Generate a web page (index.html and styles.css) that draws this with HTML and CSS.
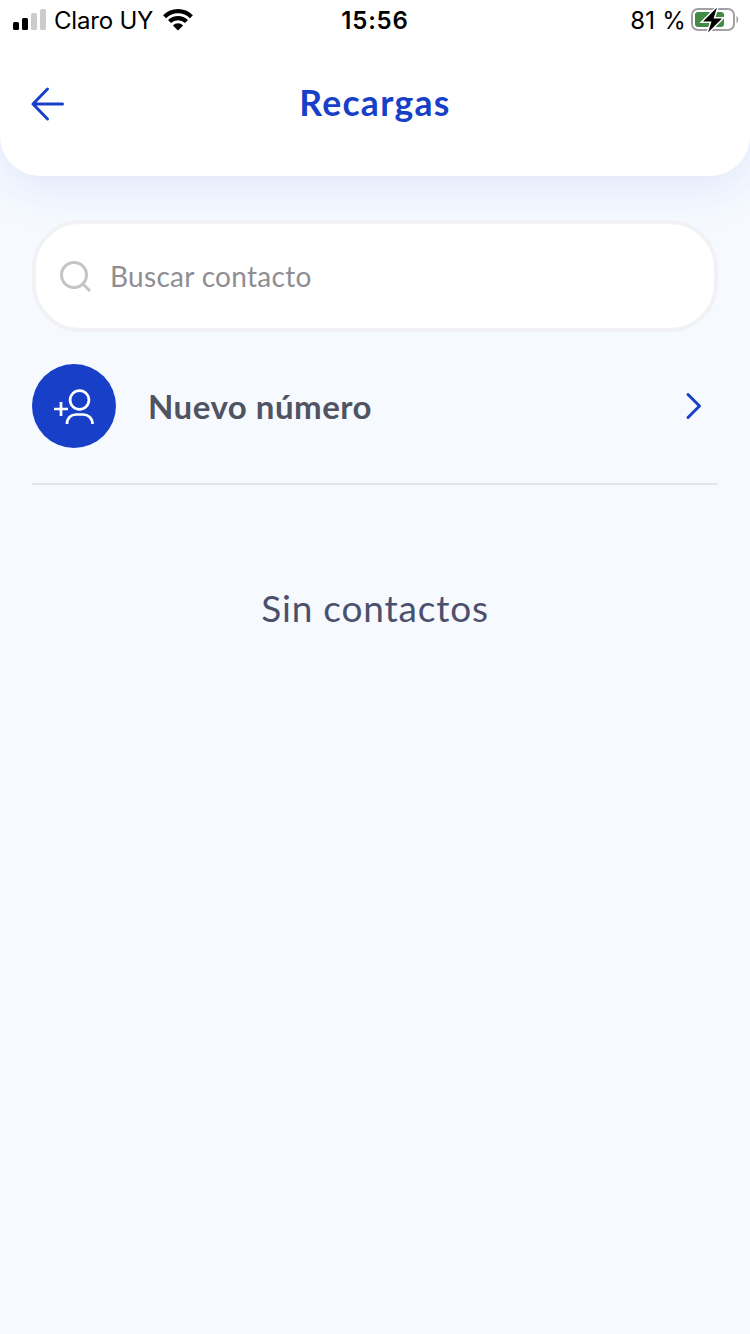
FILE: index.html
```html
<!DOCTYPE html>
<html lang="es">
<head>
<meta charset="utf-8">
<title>Recargas</title>
<link rel="stylesheet" href="styles.css">
</head>
<body>
<header class="header">
  <div class="status">
    <div class="status-left">
      <svg class="signal" width="33" height="22" viewBox="0 0 33 22">
        <rect x="0" y="13" width="6" height="8" rx="1.5"/>
        <rect x="9" y="9" width="6" height="12" rx="1.5"/>
        <rect class="dim" x="18" y="4" width="6" height="17" rx="1.5"/>
        <rect class="dim" x="27" y="0" width="6" height="21" rx="1.5"/>
      </svg>
      <span class="carrier">Claro UY</span>
      <svg class="wifi" width="30" height="22" viewBox="0 0 30 22">
        <path class="arc" d="M1.6 7.7A19 19 0 0 1 28.400 7.700M6.500 12.500A12.200 12.200 0 0 1 23.500 12.500"/>
        <path d="M9.900 16.400A7.200 7.200 0 0 1 20.100 16.400L15 21.600Z"/>
      </svg>
    </div>
    <span class="time">15:56</span>
    <div class="status-right">
      <span class="percent">81 %</span>
      <svg class="battery" width="48" height="28" viewBox="0 0 48 28">
        <rect class="case" x="1" y="3" width="42" height="21" rx="6"/>
        <rect class="charge" x="4" y="6" width="29" height="15" rx="3"/>
        <path class="cap" d="M45.500 9.500Q49 13.500 45.500 17.500Z"/>
        <path class="bolt" d="M26 1.500 12 15.500H20.500L17 26.500 31 12.500H22.500Z"/>
      </svg>
    </div>
  </div>
  <div class="nav">
    <svg class="back" width="36" height="36" viewBox="0 0 36 36"><path d="M17.500 3 3 18 17.500 33M3 18H32.500"/></svg>
    <h1 class="title">Recargas</h1>
  </div>
</header>
<main class="content">
  <div class="search">
    <svg class="magnifier" width="34" height="34" viewBox="0 0 34 34"><circle cx="15" cy="15" r="12.500"/><path d="M23 23 31 31"/></svg>
    <span class="placeholder">Buscar contacto</span>
  </div>
  <div class="row">
    <span class="avatar">
      <svg width="84" height="84" viewBox="0 0 84 84"><circle cx="47.500" cy="36" r="9.400"/><path d="M35 60C35 54 39 50.500 44 50.500H51C56 50.500 60.500 54 60.500 60M22 45H36M29 38V52"/></svg>
    </span>
    <span class="label">Nuevo número</span>
    <svg class="chevron" width="18" height="30" viewBox="0 0 18 30"><path d="M3 3.500 14.500 15 3 26.500"/></svg>
  </div>
  <p class="empty">Sin contactos</p>
</main>
</body>
</html>
```
FILE: styles.css
```css
* { box-sizing: border-box; }
body { margin: 0; min-height: 1334px; background: #f6faff; font-family: Lato, sans-serif; white-space: nowrap; }
svg { flex: none; display: block; }
.header { height: 176px; background: #fff; border-radius: 0 0 40px 40px; box-shadow: 0 12px 48px rgba(62, 92, 210, .12); }
.status { height: 40px; display: grid; grid-template-columns: 1fr auto 1fr; align-items: center; padding: 0 11px 0 13px; font: 24px/40px Inter, sans-serif; color: #000; }
.status-left, .status-right { display: flex; align-items: center; }
.status-left svg { margin-top: -1px; }
.status-right { justify-content: flex-end; gap: 5px; }
.carrier { margin: 1px 10px 0 8px; letter-spacing: -.2px; }
.time { font-weight: 600; letter-spacing: .8px; margin: 1px 2px 0 0; }
.percent { margin-top: 1px; letter-spacing: .2px; }
.battery { margin-top: -1px; }
.signal .dim { fill: #ccc; }
.arc { fill: none; stroke: #000; stroke-width: 4.2; }
.case { fill: none; stroke: #a2a2a4; stroke-width: 2; }
.charge { fill: #428b46; }
.cap { fill: #a2a2a4; }
.bolt { fill: #000; stroke: #fff; stroke-width: 3; paint-order: stroke; }
.nav { height: 128px; padding: 0 30px; display: grid; grid-template-columns: 36px 1fr 36px; align-items: center; }
.back, .chevron { fill: none; stroke: #183fc8; stroke-width: 3; stroke-linecap: round; stroke-linejoin: round; }
.title { margin: -3px 0 0; text-align: center; font: 700 35.5px/48px Lato, sans-serif; letter-spacing: 1.3px; color: #183fc8; }
.content { padding: 44px 32px 0; }
.search { height: 112px; border: 4px solid #f2f2f6; border-radius: 48px; background: #fff; display: flex; align-items: center; padding-left: 23px; gap: 17px; }
.magnifier { margin-top: 1px; fill: none; stroke: #c5c5c5; stroke-width: 3; }
.placeholder { font-size: 28px; letter-spacing: .3px; color: #8e8e93; }
.row { height: 153px; border-bottom: 2px solid #e5e6e9; padding: 32px 15px 0 0; display: flex; align-items: flex-start; }
.avatar { width: 84px; height: 84px; border-radius: 50%; background: #183fc8; }
.avatar svg { fill: none; stroke: #fff; stroke-width: 2.7; }
.label { margin-left: 32px; font-size: 33px; line-height: 84px; letter-spacing: .5px; font-weight: 700; color: #505362; }
.chevron { margin: 27px 0 0 auto; }
.empty { margin: 99px 0 0; text-align: center; font-size: 37px; line-height: 48px; letter-spacing: .8px; color: #4b506d; }
```
